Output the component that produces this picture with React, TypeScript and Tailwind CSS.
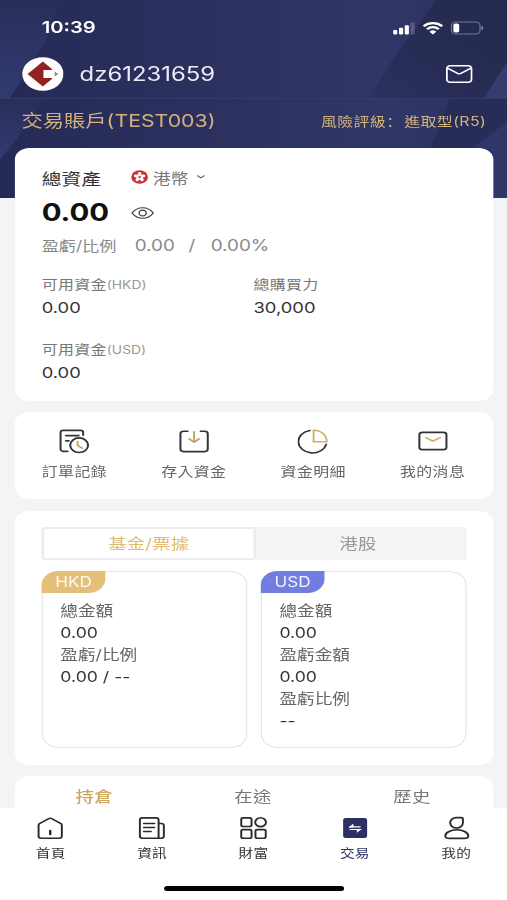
import { useState } from 'react';
import type { ReactNode } from 'react';
import clsx from 'clsx';

const actions = [
  { label: '訂單記錄', icon: <OrderIcon /> },
  { label: '存入資金', icon: <DepositIcon /> },
  { label: '資金明細', icon: <PieIcon /> },
  { label: '我的消息', icon: <MessageIcon /> },
];

const navItems = [
  { label: '首頁', icon: <HomeIcon /> },
  { label: '資訊', icon: <NewsIcon /> },
  { label: '財富', icon: <WealthIcon /> },
  { label: '交易', icon: <TradeIcon />, active: true },
  { label: '我的', icon: <UserIcon /> },
];

function HeaderBackground() {
  return (
    <svg viewBox="0 0 507 198" preserveAspectRatio="none" className="absolute inset-0 h-full w-full">
      <defs>
        <linearGradient id="top" x1="0" y1="0" x2="1" y2="0">
          <stop offset="0" stopColor="#252a55" />
          <stop offset="0.45" stopColor="#2c3160" />
          <stop offset="0.75" stopColor="#303666" />
          <stop offset="1" stopColor="#2c325f" />
        </linearGradient>
        <linearGradient id="left" x1="0" y1="0" x2="0" y2="1">
          <stop offset="0" stopColor="#292e59" />
          <stop offset="1" stopColor="#323a70" />
        </linearGradient>
        <linearGradient id="right" x1="0" y1="1" x2="1" y2="0">
          <stop offset="0" stopColor="#2c315f" />
          <stop offset="0.5" stopColor="#272c54" />
          <stop offset="1" stopColor="#24294e" />
        </linearGradient>
      </defs>
      <rect width="507" height="98" fill="url(#top)" />
      <path d="M0 0H60L46 40 10 98H0z" fill="url(#left)" />
      <path d="M436 0H507V98H370L388 66z" fill="url(#right)" />
      <path d="M507 62V98H484z" fill="#353c70" />
      <rect y="98" width="507" height="100" fill="url(#top)" />
      <path d="M0 98H45L25 128 0 160z" fill="url(#left)" />
      <path d="M450 98H507V126L478 150H430z" fill="#282d57" />
      <path d="M507 122V198H470V150z" fill="#30366a" />
      <path d="M0 98.5H507" stroke="#3a406c" strokeOpacity="0.7" />
    </svg>
  );
}

function StatusBar() {
  return (
    <div className="flex h-[50px] items-center justify-between pl-[34px] pr-[19px] pt-[5px] text-white">
      <span className="text-[16.5px] font-semibold">10:39</span>
      <div className="flex items-center gap-[6px]">
        <svg width="18" height="14" viewBox="0 0 18 14" fill="currentColor">
          <rect y="9" width="3.4" height="4.5" rx="1" />
          <rect x="4.8" y="6.8" width="3.4" height="6.7" rx="1" />
          <rect x="9.5" y="4.2" width="3.4" height="9.3" rx="1" />
          <rect x="14.2" y="1.5" width="3.4" height="12" rx="1" opacity="0.2" />
        </svg>
        <svg width="17" height="14" viewBox="0 0 17 14" fill="none" stroke="currentColor" strokeWidth="2.3">
          <path d="M.9 5.2a10.8 10.8 0 0 1 15.2 0" />
          <path d="M3.7 8.2a6.8 6.8 0 0 1 9.6 0" />
          <path d="M8.5 13.6 5.7 10.7a4 4 0 0 1 5.6 0z" fill="currentColor" stroke="none" />
        </svg>
        <svg width="27" height="14" viewBox="0 0 27 14" fill="none">
          <rect x=".6" y="1" width="23.4" height="12" rx="3.4" stroke="#74779a" />
          <rect x="2.2" y="2.6" width="4.8" height="8.8" rx="1.6" fill="#fff" />
          <path d="M25.2 5v4c.9-.4 1.4-1.1 1.4-2s-.5-1.6-1.4-2z" fill="#8d90ab" />
        </svg>
      </div>
    </div>
  );
}

function Logo() {
  return (
    <svg width="34" height="34" viewBox="0 0 34 34">
      <circle cx="17" cy="17" r="16.8" fill="#fff" />
      <path d="M17 4.5 29.3 17 17 29.5 4.5 17z" fill="#93211f" />
      <rect x="17.5" y="13" width="8.8" height="8" fill="#fff" />
      <path d="M24.5 11.5 31 17 24.5 22.5z" fill="#fff" />
      <path d="M26.6 14.6 29.6 17 26.6 19.4z" fill="#8b8b8e" />
    </svg>
  );
}

function EnvelopeIcon() {
  return (
    <svg width="22" height="20" viewBox="0 0 22 20" fill="none" stroke="#fff" strokeWidth="1.5">
      <rect x=".9" y="1.8" width="20.2" height="16.4" rx="2.8" />
      <path d="M1.4 4.2 10 9.6q1 .5 2 0L20.6 4.2" />
    </svg>
  );
}

function OrderIcon() {
  return (
    <svg width="25" height="26" viewBox="0 0 26 26" fill="none" stroke="#333" strokeWidth="1.7" strokeLinecap="round">
      <path d="M7.5 23.8H3.6A2.1 2.1 0 0 1 1.5 21.7V4A2.1 2.1 0 0 1 3.6 1.9h15A2.1 2.1 0 0 1 20.7 4v3" />
      <path d="M6 7.4h11M6 12.8h2.6" />
      <circle cx="17.3" cy="17.4" r="7.6" />
      <path d="M16 13.5v4l3.8 3" stroke="#c6a361" />
    </svg>
  );
}

function DepositIcon() {
  return (
    <svg width="25" height="26" viewBox="0 0 26 26" fill="none" stroke="#333" strokeWidth="1.7" strokeLinecap="round">
      <path d="M7.5 2.8H4A2.6 2.6 0 0 0 1.4 5.4v16A2.6 2.6 0 0 0 4 24h18a2.6 2.6 0 0 0 2.6-2.6v-16A2.6 2.6 0 0 0 22 2.8h-3.5" />
      <path d="M13 3.5v10.5M8.8 10.8l4.2 3.5 4.2-3.5" stroke="#c6a361" />
    </svg>
  );
}

function PieIcon() {
  return (
    <svg width="25" height="26" viewBox="0 0 26 26" fill="none" strokeWidth="1.6" strokeLinecap="round">
      <path d="M10.5 2A12 11.8 0 1 0 24.3 16.5" stroke="#333" />
      <path d="M13.6 1.8V13.7H24.8C24.8 7 20 1.8 13.6 1.8z" stroke="#d2b06c" />
    </svg>
  );
}

function MessageIcon() {
  return (
    <svg width="25" height="26" viewBox="0 0 26 26" fill="none" strokeWidth="1.7" strokeLinecap="round">
      <rect x="1.5" y="4" width="23" height="18" rx="2.6" stroke="#333" />
      <path d="M7 9.5 12.3 12.7q.7.4 1.4 0L19.2 9.5" stroke="#d2b06c" />
    </svg>
  );
}

function HomeIcon() {
  return (
    <svg width="22" height="24" viewBox="0 0 22 24" fill="none" stroke="#2a2a2a" strokeWidth="1.6">
      <path d="M1.5 9.2Q1.5 8 2.6 7.3L9.8 2.6Q11 1.9 12.2 2.6L19.4 7.3Q20.5 8 20.5 9.2V20Q20.5 22.2 18.4 22.2H3.6Q1.5 22.2 1.5 20z" />
      <path d="M11 14.8v3.5" strokeWidth="2" strokeLinecap="round" />
    </svg>
  );
}

function NewsIcon() {
  return (
    <svg width="22" height="24" viewBox="0 0 22 24" fill="none" stroke="#2a2a2a" strokeWidth="1.6">
      <path d="M16.5 22.2H3.3Q1.2 22.2 1.2 20V4Q1.2 1.9 3.3 1.9H14.4Q16.5 1.9 16.5 4zM16.5 7.5H18.7Q20.8 7.5 20.8 9.6V20Q20.8 22.2 18.7 22.2H16.5" />
      <path d="M4.5 7.5h8.6M4.5 11.5h8.6M4.5 15.5h5.8" strokeLinecap="round" />
    </svg>
  );
}

function WealthIcon() {
  return (
    <svg width="22" height="24" viewBox="0 0 22 24" fill="none" stroke="#2a2a2a" strokeWidth="1.6">
      <rect x="1" y="1.9" width="8.4" height="8.6" rx="1.5" />
      <circle cx="16.8" cy="6.2" r="4.4" />
      <rect x="1" y="13.6" width="8.4" height="8.6" rx="1.5" />
      <rect x="12.6" y="13.6" width="8.4" height="8.6" rx="1.5" />
    </svg>
  );
}

function TradeIcon() {
  return (
    <svg width="22" height="24" viewBox="0 0 22 24">
      <rect x="1.2" y="2" width="19.6" height="20" rx="2" fill="#2b2f63" />
      <path d="M6 10.9H15.5M6.5 13.5H16" stroke="#fff" strokeWidth="1.2" />
      <path d="M5.6 11.5 9.6 7.6V11.5zM16.4 12.9 12.4 16.8V12.9z" fill="#fff" />
    </svg>
  );
}

function UserIcon() {
  return (
    <svg width="22" height="24" viewBox="0 0 22 24" fill="none" stroke="#2a2a2a" strokeWidth="1.6">
      <path d="M10.8 1.6H14.6Q16 1.6 16 3V6.6A5.2 5.2 0 1 1 10.8 1.6z" />
      <path d="M11 13.8c5.4 0 9.4 3.2 9.4 6.2 0 1.6-1.4 2.4-3.5 2.4H5.1c-2.1 0-3.5-.8-3.5-2.4 0-3 4-6.2 9.4-6.2z" />
    </svg>
  );
}

function HkFlag() {
  return (
    <svg width="14" height="14" viewBox="0 0 14 14" className="-mt-[4px] -ml-px">
      <circle cx="7" cy="7" r="6.8" fill="#cf2f36" />
      {[0, 72, 144, 216, 288].map((angle) => (
        <ellipse key={angle} cx="7" cy="4.3" rx="1.5" ry="2.2" fill="#fff" transform={`rotate(${angle} 7 7)`} />
      ))}
      <circle cx="7" cy="7" r="1" fill="#cf2f36" />
    </svg>
  );
}

function EyeIcon() {
  return (
    <svg width="19" height="14" viewBox="0 0 19 14" fill="none" stroke="#3c3c3c" strokeWidth="1.1" className="-ml-px">
      <path d="M.8 7C3.2 3.4 6 1.7 9.5 1.7S15.8 3.4 18.2 7c-2.4 3.6-5.2 5.3-8.7 5.3S3.2 10.6.8 7z" />
      <circle cx="9.5" cy="7" r="2.9" />
    </svg>
  );
}

function Card({ className, children }: { className?: string; children: ReactNode }) {
  return <section className={clsx('ml-[12px] mr-[11.3px] rounded-[12px] bg-white', className)}>{children}</section>;
}

function Fund({ label, unit, value }: { label: string; unit?: string; value: string }) {
  return (
    <div>
      <div className="h-[22px] text-[13px] leading-[22px] tracking-[0.3px] text-[#777]">
        {label}
        {unit && <span className="text-[11.3px] tracking-normal text-[#999]">({unit})</span>}
      </div>
      <div className="h-[25px] text-[15px] leading-[25px] text-[#333]">{value}</div>
    </div>
  );
}

interface BalanceProps {
  currency: string;
  tagClass: string;
  rows: { label: string; value: string }[];
}

function BalanceBox({ currency, tagClass, rows }: BalanceProps) {
  return (
    <div className="h-[177px] flex-1 rounded-[14px] border border-[#e4e5e8]">
      <div
        className={clsx(
          '-ml-px -mt-px flex h-[22px] w-[52px] items-center justify-center rounded-br-[14px] rounded-tl-[14px] pb-px text-[14px] text-white/90',
          tagClass,
        )}
      >
        {currency}
      </div>
      <dl className="pl-[14.3px] pt-[7px] text-[14.4px] leading-[22.1px]">
        {rows.map((row) => (
          <div key={row.label}>
            <dt className="text-[#666]">{row.label}</dt>
            <dd className="text-[#333]">{row.value}</dd>
          </div>
        ))}
      </dl>
    </div>
  );
}

export default function App() {
  const [market, setMarket] = useState('基金/票據');
  const [tab, setTab] = useState('持倉');

  return (
    <div className="h-[900px] w-full overflow-hidden bg-[#f2f4f6]">
      <div className="relative flex h-[900px] w-[414px] origin-top-left scale-x-[1.2246] flex-col overflow-hidden font-['Inter','Noto_Sans_CJK_TC',sans-serif]">
        <div className="absolute inset-x-0 top-0 h-[198px]">
          <HeaderBackground />
        </div>

        <header className="relative h-[148px] shrink-0">
          <StatusBar />
          <div className="flex h-[48px] items-center pl-[18px] pr-[28.5px]">
            <Logo />
            <span className="ml-[13px] flex-1 pt-[2px] text-[19.5px] text-[#e9ebf7]">dz61231659</span>
            <EnvelopeIcon />
          </div>
          <div className="flex h-[46px] items-center justify-between pl-[17.5px] pr-[17px] text-[#d3b27c]">
            <span className="pt-px text-[17.4px]">交易賬戶(TEST003)</span>
            <span className="text-[13px] tracking-[0.3px]">
              風險評級<span className="font-['Noto_Sans_CJK_SC']">：</span>
              <span className="ml-[1.5px]">進取型(R5)</span>
            </span>
          </div>
        </header>

        <Card className="relative h-[253px] shrink-0 px-[22px] pt-[14px]">
          <div className="flex h-[34px] items-center">
            <span className="w-[74px] text-[16px] tracking-[0.3px] text-[#333]">總資產</span>
            <HkFlag />
            <span className="ml-[4px] text-[14.4px] text-[#777]">港幣</span>
            <svg width="8" height="6" viewBox="0 0 8 6" fill="none" stroke="#666" className="-mt-[4px] ml-[6px]">
              <path d="M1 1.5 4 3.8 7 1.5" />
            </svg>
          </div>
          <div className="flex h-[33px] items-center">
            <span className="w-[74px] pt-px text-[24px] font-bold text-[#111]">0.00</span>
            <EyeIcon />
          </div>
          <div className="flex h-[32px] items-center text-[15.4px] text-[#888]">
            <span className="w-[76px] text-[14px]">盈虧/比例</span>
            <span className="w-[44px] pt-px">0.00</span>
            <span className="w-[18px] pt-px">/</span>
            <span className="pt-px">0.00%</span>
          </div>
          <div className="mt-[12px] grid grid-cols-[173px_1fr] gap-y-[18px]">
            <Fund label="可用資金" unit="HKD" value="0.00" />
            <Fund label="總購買力" value="30,000" />
            <Fund label="可用資金" unit="USD" value="0.00" />
          </div>
        </Card>

        <Card className="mt-[11px] grid h-[87px] shrink-0 grid-cols-4 pr-[0.7px] pt-[16px]">
          {actions.map((action) => (
            <button key={action.label} className="flex flex-col items-center">
              {action.icon}
              <span className="mt-[6px] text-[13px] leading-[22px] tracking-[0.3px] text-[#666]">{action.label}</span>
            </button>
          ))}
        </Card>

        <Card className="mt-[12px] h-[254px] shrink-0 px-[22px] pt-[16px]">
          <div className="flex h-[33px] rounded-[3px] bg-[#f4f4f5]">
            {['基金/票據', '港股'].map((name) => (
              <button
                key={name}
                onClick={() => setMarket(name)}
                className={clsx(
                  'rounded-[3px] pt-px text-[15px] tracking-[0.2px]',
                  market === name
                    ? 'w-[175px] border-2 border-[#ececee] bg-white text-[#dfbb74]'
                    : 'flex-1 pr-[5px] text-[#999]',
                )}
              >
                {name}
              </button>
            ))}
          </div>
          <div className="mt-[11px] flex gap-[11px]">
            <BalanceBox
              currency="HKD"
              tagClass="bg-[#e5bf78]"
              rows={[
                { label: '總金額', value: '0.00' },
                { label: '盈虧/比例', value: '0.00 / --' },
              ]}
            />
            <BalanceBox
              currency="USD"
              tagClass="bg-[#717de0]"
              rows={[
                { label: '總金額', value: '0.00' },
                { label: '盈虧金額', value: '0.00' },
                { label: '盈虧比例', value: '--' },
              ]}
            />
          </div>
        </Card>

        <Card className="mt-[11px] grid h-[60px] shrink-0 grid-cols-3 items-start pr-[1.4px]">
          {['持倉', '在途', '歷史'].map((name) => (
            <button
              key={name}
              onClick={() => setTab(name)}
              className={clsx('h-[42px] text-[15px] tracking-[0.3px]', tab === name ? 'font-medium text-[#cda75e]' : 'text-[#777]')}
            >
              {name}
            </button>
          ))}
        </Card>

        <nav className="relative -mt-[28px] h-[92px] shrink-0 bg-white">
          <div className="grid grid-cols-5 pt-[8px]">
            {navItems.map((item) => (
              <button key={item.label} className="flex flex-col items-center">
                {item.icon}
                <span
                  className={clsx(
                    'mt-[5px] text-[12px] leading-[18px] tracking-[0.2px]',
                    item.active ? 'text-[#2b2f63]' : 'text-[#333]',
                  )}
                >
                  {item.label}
                </span>
              </button>
            ))}
          </div>
          <div className="mx-auto mt-[23px] h-[5px] w-[147px] rounded-full bg-black" />
        </nav>
      </div>
    </div>
  );
}
